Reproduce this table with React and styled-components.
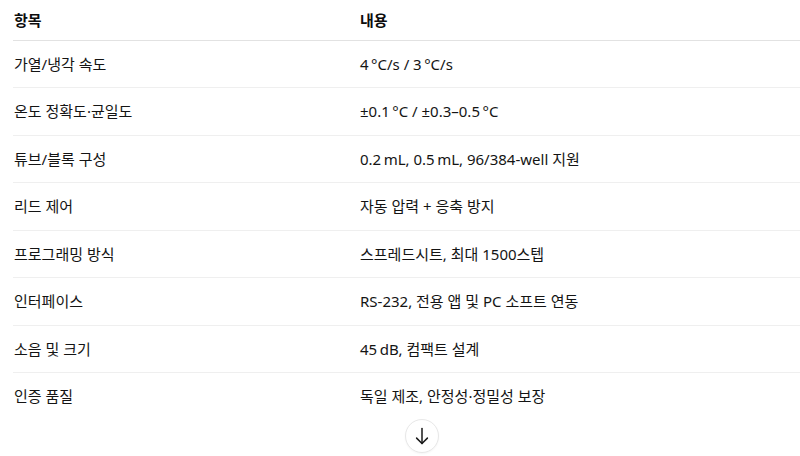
import React from "react";
import styled, { createGlobalStyle } from "styled-components";

const Global = createGlobalStyle`
  html, body { margin: 0; padding: 0; background: #fff; overflow: hidden; }
  body { font-family: "Noto Sans", "Noto Sans CJK KR", sans-serif; }
`;

const Page = styled.div`
  position: relative;
  width: 800px;
  height: 456px;
  padding-left: 13px;
  box-sizing: border-box;
`;

const Table = styled.table`
  width: 820px;
  border-collapse: collapse;
  font-size: 15px;
  line-height: 22.5px;
  color: #141414;
`;

const HeadCell = styled.th`
  text-align: left;
  font-weight: 700;
  color: #0d0d0d;
  padding: 9px 0 8px 1px;
  border-bottom: 1px solid #e2e2e2;
  box-shadow: 0 1px 0 #f2f2f2;
  width: ${(p) => (p.$first ? "345px" : "auto")};
`;

const Row = styled.tr`
  border-bottom: ${(p) => (p.$last ? "none" : "1px solid #efefef")};
`;

const Cell = styled.td`
  padding: 12px 0 12px 1px;
  font-weight: 400;
`;

const ScrollButton = styled.button`
  position: absolute;
  left: 405px;
  top: 419px;
  width: 34px;
  height: 34px;
  border-radius: 50%;
  border: 1px solid #e8e8e8;
  background: #fff;
  display: flex;
  align-items: center;
  justify-content: center;
  padding: 0;
  color: #1a1a1a;
  box-shadow: 0 1px 2px rgba(0,0,0,0.04);
`;

const ArrowIcon = () => (
  <svg width="20" height="20" viewBox="0 0 20 20" fill="none" stroke="currentColor" strokeWidth="1.5" strokeLinecap="round" strokeLinejoin="round">
    <path d="M10 2.5v15" />
    <path d="M4.6 12.1 10 17.5l5.4-5.4" />
  </svg>
);

const rows = [
  ["가열/냉각 속도", "4\u202F°C/s / 3\u202F°C/s"],
  ["온도 정확도·균일도", "±0.1\u202F°C / ±0.3–0.5\u202F°C"],
  ["튜브/블록 구성", "0.2\u202FmL, 0.5\u202FmL, 96/384-well 지원"],
  ["리드 제어", "자동 압력 + 응축 방지"],
  ["프로그래밍 방식", "스프레드시트, 최대 1500스텝"],
  ["인터페이스", "RS-232, 전용 앱 및 PC 소프트 연동"],
  ["소음 및 크기", "45\u202FdB, 컴팩트 설계"],
  ["인증 품질", "독일 제조, 안정성·정밀성 보장"],
];

export default function App() {
  return (
    <>
      <Global />
      <Page>
        <Table>
          <thead>
            <tr>
              <HeadCell $first>항목</HeadCell>
              <HeadCell>내용</HeadCell>
            </tr>
          </thead>
          <tbody>
            {rows.map(([a, b], i) => (
              <Row key={a} $last={i === rows.length - 1}>
                <Cell>{a}</Cell>
                <Cell>{b}</Cell>
              </Row>
            ))}
          </tbody>
        </Table>
        <ScrollButton aria-label="scroll down">
          <ArrowIcon />
        </ScrollButton>
      </Page>
    </>
  );
}
